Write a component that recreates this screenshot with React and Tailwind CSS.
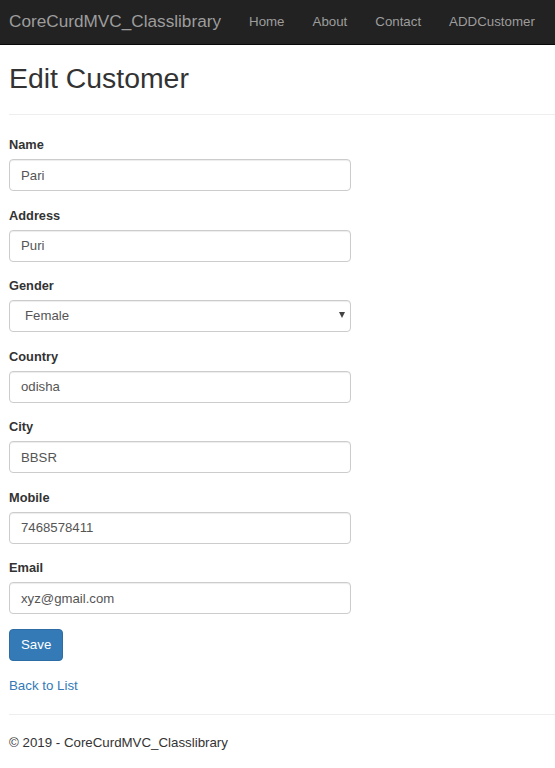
import { useState } from 'react'

const fields = [
  { id: 'Name', value: 'Pari' },
  { id: 'Address', value: 'Puri' },
  { id: 'Gender', value: 'Female', select: true },
  { id: 'Country', value: 'odisha' },
  { id: 'City', value: 'BBSR' },
  { id: 'Mobile', value: '7468578411' },
  { id: 'Email', value: 'xyz@gmail.com' },
]

function Field({ id, value, select }) {
  const [val, setVal] = useState(value)
  const box =
    'block w-[342px] h-[32px] rounded-[4px] border border-[#ccc] bg-white text-[13.2px] text-[#555] shadow-[inset_0_1px_1px_rgba(0,0,0,0.075)] focus:outline-none'

  return (
    <div className="mb-[15.5px]">
      <label htmlFor={id} className="block mb-[5px] text-[12.8px] leading-[18px] font-bold text-[#333]">
        {id}
      </label>
      {select ? (
        <div className="relative w-[342px]">
          <select
            id={id}
            value={val}
            onChange={e => setVal(e.target.value)}
            className={`${box} appearance-none pl-[15px]`}
          >
            <option>Male</option>
            <option>Female</option>
          </select>
          <span className="pointer-events-none absolute right-[6px] top-[12px] w-0 h-0 border-l-[3.5px] border-r-[3.5px] border-t-[6px] border-l-transparent border-r-transparent border-t-[#444]" />
        </div>
      ) : (
        <input id={id} value={val} onChange={e => setVal(e.target.value)} className={`${box} px-[11px]`} />
      )}
    </div>
  )
}

export default function App() {
  return (
    <div className="min-h-screen bg-white text-[#333]" style={{ fontFamily: '"Liberation Sans", Arial, sans-serif' }}>
      {/* Navbar */}
      <nav className="h-[45px] bg-[#222] border-b border-[#080808] flex items-center pl-[9px]">
        <a href="#" className="text-[17.2px] text-[#9d9d9d] pr-[14px]">CoreCurdMVC_Classlibrary</a>
        {['Home', 'About', 'Contact', 'ADDCustomer'].map(item => (
          <a key={item} href="#" className="text-[13.3px] text-[#9d9d9d] px-[14px]">
            {item}
          </a>
        ))}
      </nav>

      <div className="pl-[9px]">
        <h2 className="mt-[18px] text-[28.4px] leading-[1.1] font-normal text-[#333]">Edit Customer</h2>
        <hr className="mt-[20px] mb-[21px] border-t border-[#eee]" />

        <form onSubmit={e => e.preventDefault()}>
          {fields.map(f => (
            <Field key={f.id} {...f} />
          ))}
          <button
            type="submit"
            className="-mt-[1px] h-[32px] px-[11px] rounded-[4px] border border-[#2e6da4] bg-[#337ab7] text-white text-[13.3px]"
          >
            Save
          </button>
        </form>

        <div className="mt-[12px]">
          <a href="#" className="text-[13.3px] leading-[18px] text-[#337ab7]">Back to List</a>
        </div>

        <hr className="mt-[17px] border-t border-[#eee]" />
        <footer className="pt-[19px]">
          <p className="text-[13.3px] leading-[18px] text-[#333]">© 2019 - CoreCurdMVC_Classlibrary</p>
        </footer>
      </div>
    </div>
  )
}
